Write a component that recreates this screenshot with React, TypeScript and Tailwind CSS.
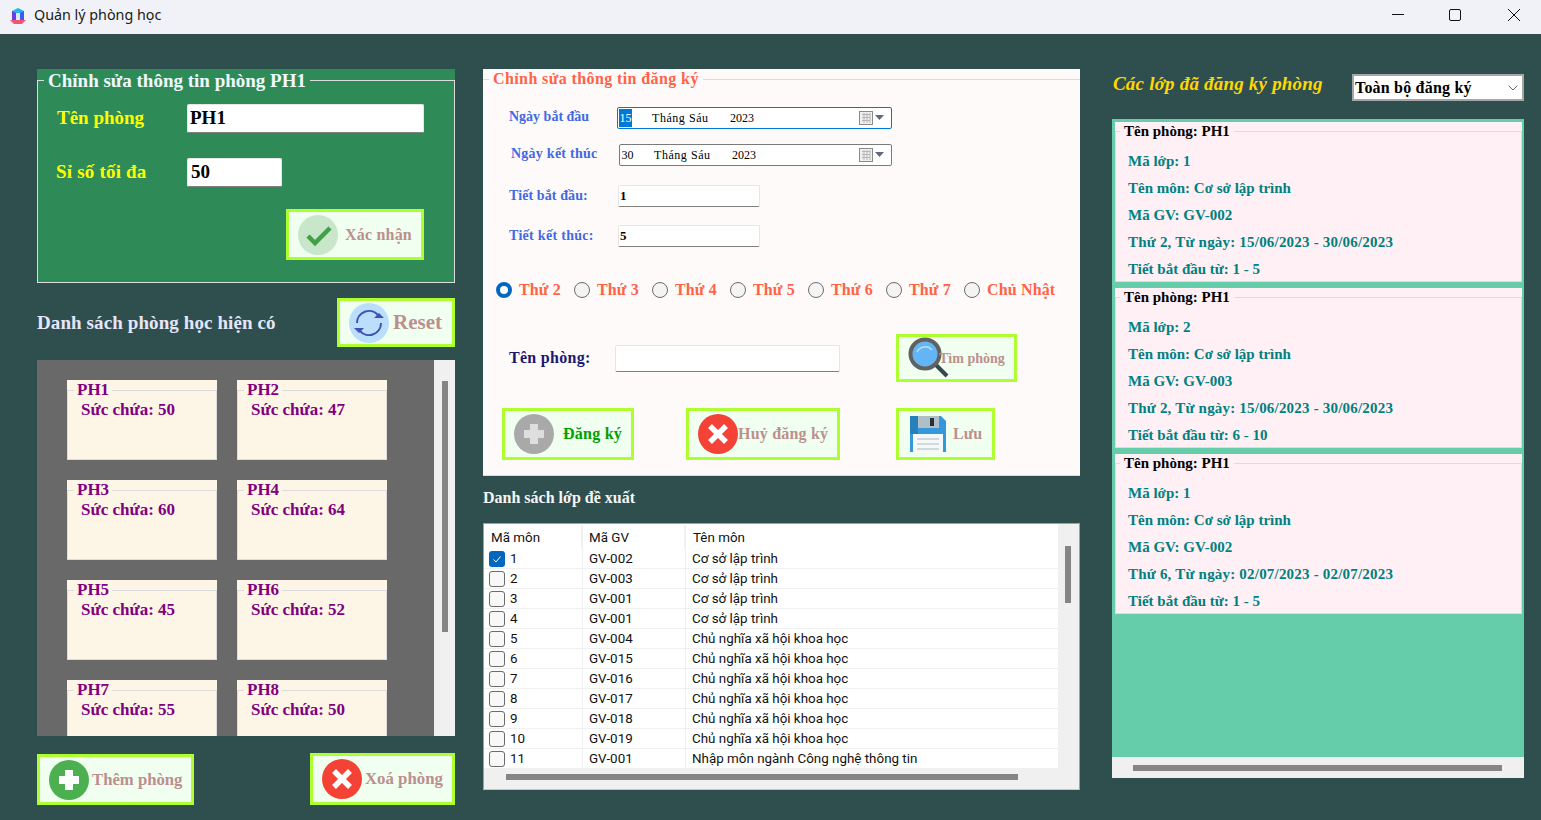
import React from 'react';

const rooms = [
  ['PH1', 50], ['PH2', 47], ['PH3', 60], ['PH4', 64],
  ['PH5', 45], ['PH6', 52], ['PH7', 55], ['PH8', 50],
] as const;

const days = ['Thứ 2', 'Thứ 3', 'Thứ 4', 'Thứ 5', 'Thứ 6', 'Thứ 7', 'Chủ Nhật'];

const CSLT = 'Cơ sở lập trình';
const CNXH = 'Chủ nghĩa xã hội khoa học';
const classes = [
  [1, 'GV-002', CSLT], [2, 'GV-003', CSLT], [3, 'GV-001', CSLT], [4, 'GV-001', CSLT],
  [5, 'GV-004', CNXH], [6, 'GV-015', CNXH], [7, 'GV-016', CNXH], [8, 'GV-017', CNXH],
  [9, 'GV-018', CNXH], [10, 'GV-019', CNXH], [11, 'GV-001', 'Nhập môn ngành Công nghệ thông tin'],
] as const;

const registered = [
  ['1', 'GV-002', 'Thứ 2, Từ ngày: 15/06/2023 - 30/06/2023', '1 - 5'],
  ['2', 'GV-003', 'Thứ 2, Từ ngày: 15/06/2023 - 30/06/2023', '6 - 10'],
  ['1', 'GV-002', 'Thứ 6, Từ ngày: 02/07/2023 - 02/07/2023', '1 - 5'],
];

function ActionButton({ className, green, children }: { className: string; green?: boolean; children: React.ReactNode }) {
  return (
    <div className={`flex shrink-0 items-center border-[3px] border-[#adff2f] bg-[#f0fff0] font-bold ${green ? 'text-[#00a000]' : 'text-[#bc8f8f]'} ${className}`}>
      {children}
    </div>
  );
}

function CircleIcon({ kind }: { kind: 'check' | 'reset' | 'plus' | 'plusGray' | 'x' }) {
  return (
    <svg width="40" height="40" viewBox="0 0 40 40" className="shrink-0">
      {kind === 'check' && (
        <>
          <circle cx="20" cy="20" r="20" fill="#c8e6c9" />
          <path d="M10 21l7 7 15-15" fill="none" stroke="#43a047" strokeWidth="4.5" />
        </>
      )}
      {kind === 'reset' && (
        <>
          <circle cx="20" cy="20" r="20" fill="#bbdefb" />
          <path d="M8 20a12 12 0 0 1 21-8M32 20a12 12 0 0 1-21 8" fill="none" stroke="#3f51b5" strokeWidth="2" />
          <path d="M25 15h10l-5-5zM5 25h10l-5 5z" fill="#3f51b5" />
        </>
      )}
      {kind === 'plus' && (
        <>
          <circle cx="20" cy="20" r="20" fill="#4caf50" />
          <path d="M16 10h8v6h6v8h-6v6h-8v-6h-6v-8h6z" fill="#fff" />
        </>
      )}
      {kind === 'plusGray' && (
        <>
          <circle cx="20" cy="20" r="20" fill="#a9a9a9" />
          <path d="M16 10h8v6h6v8h-6v6h-8v-6h-6v-8h6z" fill="#dedede" />
        </>
      )}
      {kind === 'x' && (
        <>
          <circle cx="20" cy="20" r="20" fill="#f44336" />
          <path d="M12 12l16 16M28 12L12 28" stroke="#fff" strokeWidth="5.5" />
        </>
      )}
    </svg>
  );
}

function Magnifier() {
  return (
    <svg width="42" height="42" viewBox="0 0 42 42" className="shrink-0">
      <path d="M27 27l12 12" stroke="#37474f" strokeWidth="4" />
      <circle cx="17" cy="17" r="14.5" fill="#64b5f6" stroke="#616161" strokeWidth="4" />
      <path d="M9 15a9 9 0 0 1 15-2" fill="none" stroke="#bbdefb" strokeWidth="1.5" />
    </svg>
  );
}

function Floppy() {
  return (
    <svg width="36" height="36" viewBox="0 0 36 36" className="shrink-0">
      <path d="M0 0h31l5 5v31H0z" fill="#3498db" />
      <path d="M0 0h8v18H0z" fill="#2980b9" />
      <path d="M8 0h21v12H8z" fill="#b0bec5" />
      <path d="M20 2h4v8h-4z" fill="#263238" />
      <path d="M3 18h30v18H3z" fill="#f5f7f8" />
      <path d="M7 22h22v2H7zM7 27h22v2H7zM7 32h22v2H7z" fill="#cfd8dc" />
    </svg>
  );
}

function DateBox({ day, focused, className }: { day: string; focused?: boolean; className: string }) {
  return (
    <div className={`flex h-[22px] items-center rounded-[2px] border bg-white text-[12px] text-black ${focused ? 'border-[#0078d7]' : 'border-[#7a7a7a]'} ${className}`}>
      <span className={`ml-px flex h-[18px] w-[13px] items-center justify-center ${focused ? 'bg-[#0078d7] text-white' : ''}`}>{day}</span>
      <span className="ml-[20px] w-[78px] tracking-[0.55px]">Tháng Sáu</span>
      <span>2023</span>
      <svg width="26" height="16" viewBox="0 0 26 16" className="ml-auto mr-[6px]">
        <rect x="0.5" y="1.5" width="13" height="13" fill="#f0f0f0" stroke="#8a8a8a" />
        <path d="M3 4.5h8M3 7.5h8M3 10.5h8M5 3v10M8 3v10M11 3v10" stroke="#b5b5b5" />
        <path d="M16 5h9l-4.500 5z" fill="#5a6a85" />
      </svg>
    </div>
  );
}

function SmallInput({ value, className }: { value?: string; className: string }) {
  return (
    <div className={`flex items-center rounded-[2px] border border-[#e6e6e6] border-b-[#808080] bg-white font-bold text-black ${className}`}>
      {value}
    </div>
  );
}

function RoomCard({ name, size }: { name: string; size: number }) {
  return (
    <div className="h-[80px] w-[150px] bg-[#fdf5e6]">
      <fieldset className="h-[80px] border border-[#dcdcdc]">
        <legend className="ml-[6px] h-[20px] px-[3px] text-[17px] leading-[19px] font-bold text-[#800080]">{name}</legend>
        <div className="pl-[13px] text-[17px] leading-[20px] font-bold text-[#800080]">Sức chứa: {size}</div>
      </fieldset>
    </div>
  );
}

function RegisteredCard({ id, gv, when, period }: { id: string; gv: string; when: string; period: string }) {
  return (
    <div className="h-[160px] bg-[#fff0f5]">
      <fieldset className="h-[160px] border border-[#dcdcdc]">
        <legend className="ml-[4px] h-[18px] px-[4px] text-[15px] leading-[18px] font-bold text-black">Tên phòng: PH1</legend>
        <div className="flex flex-col gap-[9px] pl-[12px] pt-[12px] text-[15px] leading-[18px] font-bold text-[#008080]">
          <div>Mã lớp: {id}</div>
          <div>Tên môn: {CSLT}</div>
          <div>Mã GV: {gv}</div>
          <div className="tracking-[0.2px]">{when}</div>
          <div>Tiết bắt đầu từ: {period}</div>
        </div>
      </fieldset>
    </div>
  );
}

export default function App() {
  return (
    <div className="h-[820px] w-[1541px] overflow-hidden bg-[#2f4f4f] font-['Liberation_Serif',serif]">
      {/* title bar */}
      <div className="flex h-[34px] items-center bg-[#f1f2f8] pl-[10px] text-black">
        <svg width="16" height="16" viewBox="0 0 16 16" className="-mt-[2px]">
          <path d="M2 3l6-3 6 3v9H2z" fill="#22b8e6" />
          <path d="M2 3l4 2v7H2z" fill="#6a3de8" />
          <path d="M10 5l4-2v9h-4z" fill="#3d5af1" />
          <path d="M6 5h4v7H6z" fill="#dfe6f5" />
          <path d="M0 12h16l-4 4H4z" fill="#f0566f" />
        </svg>
        <span className="-mt-[4px] ml-[8px] font-['Noto_Sans',sans-serif] text-[14.3px] text-[#1a1a1a]">Quản lý phòng học</span>
        <div className="-mt-[4px] ml-auto flex items-center">
          <svg width="14" height="14" viewBox="0 0 14 14" className="mr-[43px]"><path d="M1 6.500h12" stroke="#111" strokeWidth="1" /></svg>
          <svg width="14" height="14" viewBox="0 0 14 14" className="mr-[45px]"><rect x="1.500" y="1.500" width="11" height="11" rx="1.500" fill="none" stroke="#111" /></svg>
          <svg width="14" height="14" viewBox="0 0 14 14" className="mr-[20px]"><path d="M1 1l12 12M13 1L1 13" stroke="#111" /></svg>
        </div>
      </div>

      <div className="flex pl-[37px] pt-[35px]">
        {/* left column */}
        <div className="flex w-[418px] flex-col">
          <div className="h-[214px] bg-[#2e8b57]">
            <fieldset className="h-[214px] border border-[#dcdcdc]">
              <legend className="ml-[6px] h-[22px] px-[4px] text-[19px] leading-[24px] font-bold text-[#f0f8ff]">Chỉnh sửa thông tin phòng PH1</legend>
              <div className="flex items-center pl-[19px] pt-[13px]">
                <span className="w-[130px] text-[19px] font-bold text-[#ffff00]">Tên phòng</span>
                <SmallInput value="PH1" className="h-[29px] w-[237px] pl-[2px] text-[19px]" />
              </div>
              <div className="flex items-center pl-[18px] pt-[25px]">
                <span className="w-[131px] text-[19px] font-bold tracking-[0.2px] text-[#ffff00]">Sỉ số tối đa</span>
                <SmallInput value="50" className="h-[29px] w-[95px] pl-[3px] text-[19px]" />
              </div>
              <div className="flex justify-end pr-[30px] pt-[22px]">
                <ActionButton className="h-[51px] w-[138px] gap-[7px] pl-[9px] text-[16px] tracking-[0.2px]">
                  <CircleIcon kind="check" />
                  <span>Xác nhận</span>
                </ActionButton>
              </div>
            </fieldset>
          </div>

          <div className="mt-[15px] flex items-center justify-between">
            <span className="pt-[2px] text-[19px] font-bold tracking-[0.1px] text-[#e6e6fa]">Danh sách phòng học hiện có</span>
            <ActionButton className="h-[49px] w-[118px] gap-[4px] pl-[9px] text-[21px]">
              <CircleIcon kind="reset" />
              <span>Reset</span>
            </ActionButton>
          </div>

          <div className="mt-[13px] flex h-[376px] overflow-hidden bg-[#696969]">
            <div className="grid flex-1 grid-cols-[150px_150px] content-start gap-[20px] pl-[30px] pt-[20px]">
              {rooms.map(([name, size]) => <RoomCard key={name} name={name} size={size} />)}
            </div>
            <div className="w-[21px] bg-[#f0f0f0] pl-[8px] pt-[21px]">
              <div className="h-[251px] w-[6px] bg-[#858585]" />
            </div>
          </div>

          <div className="mt-[17px] flex items-end justify-between">
            <ActionButton className="h-[51px] w-[157px] gap-[3px] pl-[9px] text-[16.7px]">
              <CircleIcon kind="plus" />
              <span>Thêm phòng</span>
            </ActionButton>
            <ActionButton className="h-[52px] w-[145px] pl-[9px] text-[16.8px]">
              <CircleIcon kind="x" />
              <span className="ml-[3px]">Xoá phòng</span>
            </ActionButton>
          </div>
        </div>

        {/* middle column */}
        <div className="ml-[28px] flex w-[597px] flex-col">
          <div className="h-[407px] border-b border-[#dcdcdc] bg-[#fffafa]">
            <fieldset className="border-t border-[#dcdcdc]">
              <legend className="ml-[6px] h-[20px] px-[4px] text-[16px] leading-[19px] font-bold tracking-[0.4px] text-[#ff6347]">Chỉnh sửa thông tin đăng ký</legend>
              <div className="flex items-center pl-[26px] pt-[18px]">
                <span className="-mt-[3px] w-[108px] text-[14px] font-bold text-[#4169e1]">Ngày bắt đầu</span>
                <DateBox day="15" focused className="w-[275px]" />
              </div>
              <div className="flex items-center pl-[28px] pt-[15px]">
                <span className="-mt-[3px] w-[108px] text-[14px] font-bold tracking-[0.25px] text-[#4169e1]">Ngày kết thúc</span>
                <DateBox day="30" className="w-[273px]" />
              </div>
              <div className="flex items-center pl-[26px] pt-[19px]">
                <span className="-mt-[2px] w-[109px] text-[14px] font-bold tracking-[0.1px] text-[#4169e1]">Tiết bắt đầu:</span>
                <SmallInput value="1" className="h-[22px] w-[142px] pl-px text-[13px]" />
              </div>
              <div className="flex items-center pl-[26px] pt-[18px]">
                <span className="-mt-[2px] w-[109px] text-[14px] font-bold tracking-[0.3px] text-[#4169e1]">Tiết kết thúc:</span>
                <SmallInput value="5" className="h-[22px] w-[142px] pl-px text-[13px]" />
              </div>
              <div className="flex pl-[13px] pt-[33px]">
                {days.map((d, i) => (
                  <div key={d} className="flex w-[78px] shrink-0 items-center text-[16px] leading-[20px] font-bold tracking-[0.15px] whitespace-nowrap text-[#ff6347]">
                    <span className={`mr-[7px] h-[16px] w-[16px] shrink-0 rounded-full ${i === 0 ? 'border-[4px] border-[#0067c0] bg-white' : 'border border-[#6b6b6b] bg-[#f4f4f4]'}`} />
                    {d}
                  </div>
                ))}
              </div>
              <div className="flex items-center pl-[26px] pt-[34px]">
                <span className="w-[106px] text-[16px] font-bold tracking-[0.3px] text-[#191970]">Tên phòng:</span>
                <SmallInput className="h-[27px] w-[225px]" />
                <ActionButton className="ml-[56px] h-[48px] w-[121px] pl-[9px] text-[14px]">
                  <Magnifier />
                  <span className="-ml-[11px]">Tìm phòng</span>
                </ActionButton>
              </div>
              <div className="flex pl-[19px] pt-[26px]">
                <ActionButton green className="h-[52px] w-[132px] gap-[9px] pl-[9px] text-[16px] tracking-[0.25px]">
                  <CircleIcon kind="plusGray" />
                  <span>Đăng ký</span>
                </ActionButton>
                <ActionButton className="ml-[52px] h-[52px] w-[154px] pl-[9px] text-[16px] tracking-[0.2px]">
                  <CircleIcon kind="x" />
                  <span>Huỷ đăng ký</span>
                </ActionButton>
                <ActionButton className="ml-[56px] h-[52px] w-[99px] gap-[7px] pl-[11px] text-[16px]">
                  <Floppy />
                  <span>Lưu</span>
                </ActionButton>
              </div>
            </fieldset>
          </div>

          <div className="mt-[11px] text-[16px] leading-[22px] font-bold text-[#f5f5f5]">Danh sách lớp đề xuất</div>

          <div className="mt-[14px] flex h-[267px] flex-col border border-[#a0a0a0] border-b-[#c8c8c8] bg-[#f0f0f0] font-['Roboto',sans-serif] text-[13.4px] text-[#111]">
            <div className="flex h-[244px]">
              <div className="h-[244px] w-[574px] overflow-hidden bg-white">
                <div className="mt-px grid h-[24px] grid-cols-[99px_103px_1fr] items-center">
                  <span className="border-r-2 border-[#f0f0f0] pl-[7px] pt-px leading-[23px]">Mã môn</span>
                  <span className="border-r-2 border-[#f0f0f0] pl-[6px] pt-px leading-[23px]">Mã GV</span>
                  <span className="pl-[7px] pt-px leading-[23px]">Tên môn</span>
                </div>
                {classes.map(([id, gv, name]) => (
                  <div key={id} className="grid h-[20px] grid-cols-[99px_103px_1fr] items-center border-b border-[#f0f0f0]">
                    <div className="flex h-[19px] items-center border-r border-[#f0f0f0] pl-[5px]">
                      <span className={`mr-[5px] flex h-[16px] w-[16px] items-center justify-center rounded-[3px] ${id === 1 ? 'bg-[#0067c0]' : 'border border-[#6b6b6b] bg-[#f8f8f8]'}`}>
                        {id === 1 && (
                          <svg width="10" height="10" viewBox="0 0 10 10"><path d="M1.500 5.500l2.500 2.500 4.500-5.500" fill="none" stroke="#fff" /></svg>
                        )}
                      </span>
                      <span className="pt-px leading-[18px]">{id}</span>
                    </div>
                    <div className="h-[19px] border-r border-[#f0f0f0] pl-[6px] pt-px leading-[18px]">{gv}</div>
                    <div className="h-[19px] pl-[6px] pt-px leading-[18px]">{name}</div>
                  </div>
                ))}
              </div>
              <div className="flex-1 pl-[7px] pt-[22px]">
                <div className="h-[57px] w-[6px] bg-[#858585]" />
              </div>
            </div>
            <div className="pl-[22px] pt-[6px]">
              <div className="h-[6px] w-[512px] bg-[#858585]" />
            </div>
          </div>
        </div>

        {/* right column */}
        <div className="ml-[32px] flex w-[412px] flex-col">
          <div className="flex h-[50px] items-start justify-between pt-[5px]">
            <span className="pl-px text-[19px] leading-[20px] font-bold tracking-[0.2px] italic text-[#ffd700]">Các lớp đã đăng ký phòng</span>
            <div className="flex h-[27px] w-[172px] items-center justify-between border-2 border-[#a6a6a6] bg-white pl-px pr-[4px] text-[16px] font-bold tracking-[0.2px] text-black">
              <span>Toàn bộ đăng ký</span>
              <svg width="10" height="6" viewBox="0 0 10 6"><path d="M0.500 0.500L5 5l4.500-4.500" fill="none" stroke="#666" /></svg>
            </div>
          </div>
          <div className="flex h-[659px] flex-col bg-[#66cdaa]">
            <div className="flex h-[638px] flex-col gap-[6px] pl-[3px] pr-[2px] pt-[3px]">
              {registered.map((r, i) => <RegisteredCard key={i} id={r[0]} gv={r[1]} when={r[2]} period={r[3]} />)}
            </div>
            <div className="h-[21px] bg-[#f0f0f0] pl-[21px] pt-[8px]">
              <div className="h-[6px] w-[369px] bg-[#858585]" />
            </div>
          </div>
        </div>
      </div>
    </div>
  );
}
